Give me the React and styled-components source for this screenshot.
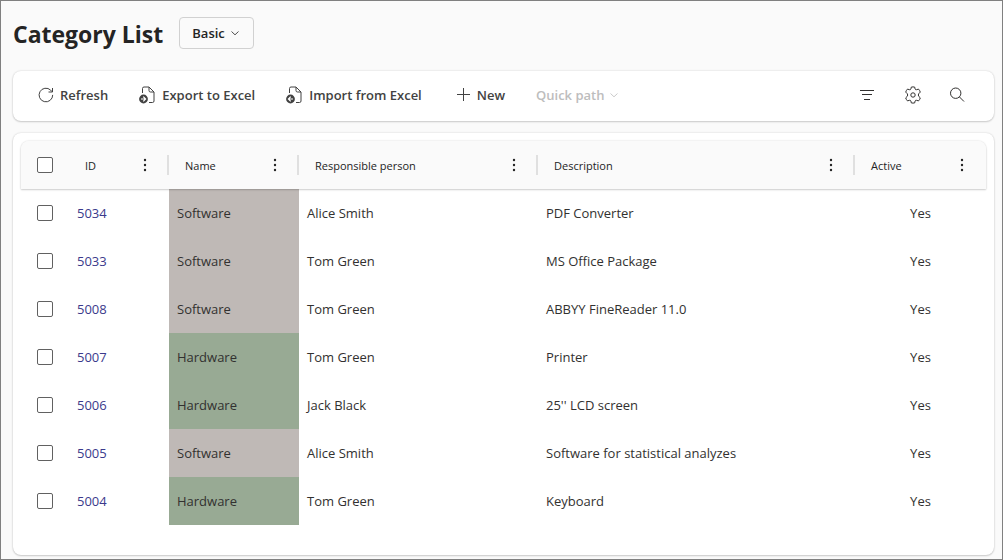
import React from "react";
import styled, { createGlobalStyle } from "styled-components";

const rows = [
  { id: "5034", name: "Software", person: "Alice Smith", description: "PDF Converter", active: "Yes" },
  { id: "5033", name: "Software", person: "Tom Green", description: "MS Office Package", active: "Yes" },
  { id: "5008", name: "Software", person: "Tom Green", description: "ABBYY FineReader 11.0", active: "Yes" },
  { id: "5007", name: "Hardware", person: "Tom Green", description: "Printer", active: "Yes" },
  { id: "5006", name: "Hardware", person: "Jack Black", description: "25'' LCD screen", active: "Yes" },
  { id: "5005", name: "Software", person: "Alice Smith", description: "Software for statistical analyzes", active: "Yes" },
  { id: "5004", name: "Hardware", person: "Tom Green", description: "Keyboard", active: "Yes" },
];

const columns = ["ID", "Name", "Responsible person", "Description", "Active"];

const Chevron = () => (
  <Icon width="8" height="8" viewBox="0 0 8 8">
    <path strokeWidth="0.8" d="M0.5 2.5 L4 5.8 L7.5 2.5" />
  </Icon>
);

const RefreshIcon = () => (
  <Icon width="16" height="16" viewBox="0 0 16 16">
    <path d="M14.7 7.9 A6.8 6.8 0 1 1 12.6 3.1 L14.4 4.9 M14.5 1 V5 H10.5" />
  </Icon>
);

const FileIcon = ({ back }) => (
  <Icon width="17" height="18" viewBox="0 0 17 18">
    <path d="M3.5 7 V2.5 Q3.5 1 5 1 H10 L15 6 V15 Q15 16.5 13.5 16.5 H10 M10 1 V4.5 Q10 6 11.5 6 H15" />
    <circle cx="4.5" cy="13" r="4.4" fill="currentColor" stroke="none" />
    <path
      stroke="#fff"
      strokeWidth="1.2"
      d={back ? "M7 13 H2.5 M4.7 10.7 L2.4 13 L4.7 15.3" : "M2 13 H6.5 M4.3 10.7 L6.6 13 L4.3 15.3"}
    />
  </Icon>
);

const PlusIcon = () => (
  <Icon width="18" height="14" viewBox="-4 0 18 14">
    <path d="M6.5 0 V13 M0 6.5 H13" />
  </Icon>
);

const FilterIcon = () => (
  <Icon width="16" height="16" viewBox="0 0 16 16">
    <path d="M1 3.5 H15 M3 7.5 H13 M5 12.5 H11" />
  </Icon>
);

const GearIcon = () => (
  <Icon width="20" height="18" viewBox="-2 0 20 18">
    <circle cx="9" cy="9" r="2.2" />
    <path d="M7.3 1.1 Q9 0.7 10.7 1.1 L11.1 3 Q11.5 4 12.6 3.7 L14.5 3.1 Q15.8 4.4 16.3 6.1 L14.9 7.5 Q13.6 9 14.9 10.5 L16.3 11.9 Q15.8 13.6 14.5 14.9 L12.6 14.3 Q11.5 14 11.1 15 L10.7 16.9 Q9 17.3 7.3 16.9 L6.9 15 Q6.5 14 5.4 14.3 L3.5 14.9 Q2.2 13.6 1.7 11.9 L3.1 10.5 Q4.4 9 3.1 7.5 L1.7 6.1 Q2.2 4.4 3.5 3.1 L5.4 3.7 Q6.5 4 6.9 3 Z" />
  </Icon>
);

const SearchIcon = () => (
  <Icon width="16" height="16" viewBox="0 0 16 16">
    <circle cx="6.7" cy="6.2" r="5.2" />
    <path d="M10.4 9.9 L15 14.5" />
  </Icon>
);

const DotsIcon = () => (
  <Dots width="4" height="14" viewBox="0 0 4 14">
    <circle cx="2" cy="2" r="1.2" />
    <circle cx="2" cy="7" r="1.2" />
    <circle cx="2" cy="12" r="1.2" />
  </Dots>
);

const App = () => {
  return (
    <Page>
      <GlobalStyle />
      <TitleBar>
        <Title>Category List</Title>
        <ViewButton>
          Basic
          <Chevron />
        </ViewButton>
      </TitleBar>

      <Toolbar>
        <Actions>
          <Action>
            <RefreshIcon />
            Refresh
          </Action>
          <Action>
            <FileIcon />
            Export to Excel
          </Action>
          <Action>
            <FileIcon back />
            Import from Excel
          </Action>
          <Action>
            <PlusIcon />
            New
          </Action>
          <Action disabled>
            Quick path
            <Chevron />
          </Action>
        </Actions>
        <Tools>
          <ToolButton aria-label="Filter">
            <FilterIcon />
          </ToolButton>
          <ToolButton aria-label="Settings">
            <GearIcon />
          </ToolButton>
          <ToolButton aria-label="Search">
            <SearchIcon />
          </ToolButton>
        </Tools>
      </Toolbar>

      <Card>
        <Table>
          <colgroup>
            <Col $width="48px" />
            <Col $width="100px" />
            <Col $width="130px" />
            <Col $width="239px" />
            <Col />
            <Col $width="131px" />
          </colgroup>
          <thead>
            <HeadRow>
              <HeadCell>
                <Checkbox aria-label="Select all" />
              </HeadCell>
              {columns.map((column) => (
                <HeadCell key={column}>
                  <HeadContent>
                    {column}
                    <MenuButton aria-label={`${column} menu`}>
                      <DotsIcon />
                    </MenuButton>
                  </HeadContent>
                </HeadCell>
              ))}
            </HeadRow>
          </thead>
          <tbody>
            {rows.map((row) => (
              <tr key={row.id}>
                <CheckCell>
                  <Checkbox aria-label={`Select ${row.id}`} />
                </CheckCell>
                <Cell>
                  <IdLink href="#">{row.id}</IdLink>
                </Cell>
                <NameCell $kind={row.name}>{row.name}</NameCell>
                <Cell>{row.person}</Cell>
                <Cell>{row.description}</Cell>
                <ActiveCell>{row.active}</ActiveCell>
              </tr>
            ))}
          </tbody>
        </Table>
      </Card>
    </Page>
  );
};

export default App;

const GlobalStyle = createGlobalStyle`
  * {
    box-sizing: border-box;
  }

  body {
    margin: 0;
    background-color: #fafafa;
    font-family: "Open Sans", "Noto Sans", sans-serif;
    font-size: 13px;
    color: #323130;
  }

  button {
    border: none;
    padding: 0;
    background: none;
    font: inherit;
    color: inherit;
    cursor: pointer;
  }
`;

const Page = styled.div`
  display: flex;
  flex-direction: column;
  min-height: 100vh;
  padding: 16px 8px 4px 12px;
  border: 1px solid #808080;
`;

const TitleBar = styled.div`
  display: flex;
  align-items: center;
  gap: 16px;
  height: 32px;
`;

const Title = styled.h1`
  margin: 0;
  padding-top: 2px;
  font-size: 23px;
  line-height: 32px;
  font-weight: 700;
  color: #242424;
`;

const ViewButton = styled.button`
  && {
    display: flex;
    align-items: center;
    gap: 6px;
    height: 32px;
    padding: 0 14px 0 12px;
    border: 1px solid #d1d1d1;
    border-radius: 4px;
    font-weight: 600;
    color: #242424;
  }
`;

const Icon = styled.svg`
  flex: none;
  fill: none;
  stroke: currentColor;
  stroke-width: 1;
`;

const Toolbar = styled.div`
  display: flex;
  align-items: center;
  justify-content: space-between;
  height: 50px;
  margin-top: 22px;
  padding: 0 29px 2px 25px;
  border-radius: 8px;
  background-color: white;
  box-shadow: 0 0 2px rgba(0, 0, 0, 0.16), 0 1px 2px rgba(0, 0, 0, 0.16);
`;

const Actions = styled.div`
  display: flex;
  align-items: center;
  gap: 31px;
`;

const Action = styled.button`
  && {
    display: flex;
    align-items: center;
    gap: 6px;
    font-weight: 600;
    color: ${({ disabled }) => (disabled ? "#bdbdbd" : "#424242")};
  }
`;

const Tools = styled.div`
  display: flex;
  align-items: center;
  gap: 27px;
`;

const ToolButton = styled.button`
  display: flex;
`;

const Card = styled.div`
  flex: 1;
  margin-top: 12px;
  padding: 8px;
  border-radius: 8px;
  background-color: white;
  box-shadow: 0 0 2px rgba(0, 0, 0, 0.16), 0 1px 2px rgba(0, 0, 0, 0.16);
`;

const Table = styled.table`
  width: 100%;
  table-layout: fixed;
  border-collapse: separate;
  border-spacing: 0;
`;

const Col = styled.col`
  width: ${({ $width }) => $width || "auto"};
`;

const HeadRow = styled.tr`
  position: relative;
  border-radius: 8px 8px 0 0;
  box-shadow: 0 0 2px rgba(0, 0, 0, 0.16), 0 1px 2px rgba(0, 0, 0, 0.16);
`;

const HeadCell = styled.th`
  height: 48px;
  padding: 0;
  background-color: #fafafa;
  font-size: 11px;
  font-weight: 400;
  text-align: left;
  color: #242424;

  &:first-child {
    padding-left: 16px;
    border-top-left-radius: 8px;
  }

  &:last-child {
    border-top-right-radius: 8px;
  }
`;

const HeadContent = styled.div`
  display: flex;
  align-items: center;
  justify-content: space-between;
  height: 20px;
  padding: 0 20px 0 16px;
  border-right: 2px solid #e0e0e0;

  th:last-child & {
    border-color: transparent;
  }
`;

const MenuButton = styled.button`
  display: flex;
`;

const Dots = styled.svg`
  fill: #242424;
`;

const Cell = styled.td`
  height: 48px;
  padding: 0 8px;
  white-space: nowrap;
`;

const CheckCell = styled(Cell)`
  padding: 0 0 0 16px;
`;

const NameCell = styled(Cell)`
  background-color: ${({ $kind }) => ($kind === "Hardware" ? "#98aa94" : "#bfb9b6")};
`;

const ActiveCell = styled(Cell)`
  text-align: center;
`;

const IdLink = styled.a`
  color: #3b3a8c;
  text-decoration: none;
`;

const Checkbox = styled.input.attrs({ type: "checkbox" })`
  appearance: none;
  display: block;
  width: 16px;
  height: 16px;
  margin: 0;
  border: 1px solid #616161;
  border-radius: 2px;
  background-color: white;

  &:checked {
    background-color: #616161;
  }
`;
